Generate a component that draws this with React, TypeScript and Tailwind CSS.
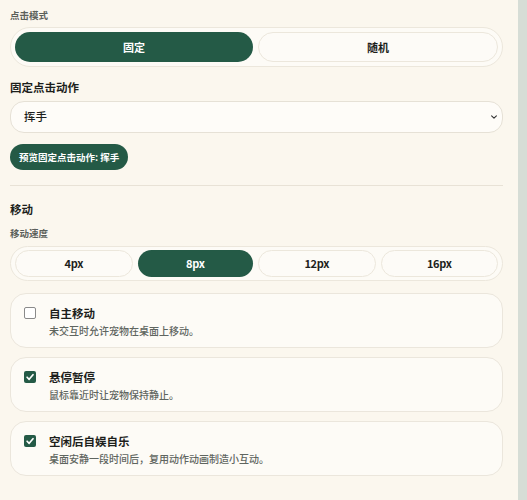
import React, { useState } from "react";

const font = { fontFamily: '"Noto Sans CJK SC", "Noto Sans", sans-serif' };

function Check({ checked }: { checked: boolean }) {
  return checked ? (
    <span className="flex h-[12px] w-[12px] items-center justify-center rounded-[2px] bg-[#245a46]">
      <svg viewBox="0 0 12 12" className="h-[10px] w-[10px]" fill="none" stroke="white" strokeWidth="2" strokeLinecap="round" strokeLinejoin="round">
        <path d="M2.5 6.3 L5 8.8 L9.6 3.2" />
      </svg>
    </span>
  ) : (
    <span className="block h-[12px] w-[12px] rounded-[2px] border border-[#8a8a8a] bg-white" />
  );
}

function Card({ title, desc, checked }: { title: string; desc: string; checked: boolean }) {
  return (
    <div className="flex h-[55px] items-start gap-[13px] rounded-[16px] border border-[#ebe6dc] bg-[#fdfbf6] pl-[13px] pt-[13px]">
      <Check checked={checked} />
      <div className="-mt-[3px] flex flex-col">
        <span className="text-[11.5px] font-bold leading-[18px] text-[#1d1f1c]">{title}</span>
        <span className="text-[10px] font-medium leading-[17px] text-[#5f655f]">{desc}</span>
      </div>
    </div>
  );
}

export default function App() {
  const [mode, setMode] = useState("固定");
  const [speed, setSpeed] = useState("8px");
  return (
    <div className="flex h-[500px] w-[527px] overflow-hidden bg-[#fbf7ee]" style={font}>
      <div className="flex w-[518px] flex-col pl-[10px] pr-[15px] pt-[7px]">
        <div className="text-[9.5px] font-bold leading-[16px] text-[#5b605a]">点击模式</div>
        <div className="mt-[4px] flex h-[40px] gap-[5px] rounded-full border border-[#ece7dc] bg-[#fdfbf6] p-[4px]">
          {["固定", "随机"].map((m) => (
            <button
              key={m}
              onClick={() => setMode(m)}
              className={
                m === mode
                  ? "flex-1 rounded-full bg-[#245a46] text-[11px] font-bold text-white"
                  : "flex-1 rounded-full border border-[#ece7dc] bg-[#fdfbf7] text-[11px] font-bold text-[#1d1f1c]"
              }
            >
              {m}
            </button>
          ))}
        </div>
        <div className="mt-[10px] text-[11.5px] font-bold leading-[20px] text-[#1d1f1c]">固定点击动作</div>
        <div className="mt-[4px] flex h-[32px] items-center justify-between rounded-[14px] border border-[#e6e1d6] bg-[#fefcf8] pl-[13px] pr-[4px]">
          <span className="text-[11.5px] font-medium text-[#1d1f1c]">挥手</span>
          <svg viewBox="0 0 10 10" className="h-[8px] w-[8px]" fill="none" stroke="#333" strokeWidth="1.4" strokeLinecap="round" strokeLinejoin="round">
            <path d="M2 3.5 L5 6.5 L8 3.5" />
          </svg>
        </div>
        <div className="mt-[11px] flex">
          <button className="h-[26px] rounded-full bg-[#245a46] px-[9px] text-[9.5px] font-bold text-white">
            预览固定点击动作: 挥手
          </button>
        </div>
        <div className="mt-[15px] h-px bg-[#e8e2d6]" />
        <div className="mt-[13px] text-[11.5px] font-bold leading-[20px] text-[#1d1f1c]">移动</div>
        <div className="mt-[6px] text-[9.5px] font-bold leading-[16px] text-[#5b605a]">移动速度</div>
        <div className="mt-[5px] flex h-[35px] gap-[5px] rounded-full border border-[#ece7dc] bg-[#fdfbf6] p-[3px] px-[4px]">
          {["4px", "8px", "12px", "16px"].map((s) => (
            <button
              key={s}
              onClick={() => setSpeed(s)}
              className={
                s === speed
                  ? "flex-1 rounded-full bg-[#245a46] text-[11px] font-bold tracking-[-0.3px] text-white"
                  : "flex-1 rounded-full border border-[#ece7dc] bg-[#fdfbf7] text-[11px] font-bold tracking-[-0.3px] text-[#1d1f1c]"
              }
            >
              {s}
            </button>
          ))}
        </div>
        <div className="mt-[12px] flex flex-col gap-[9px]">
          <Card title="自主移动" desc="未交互时允许宠物在桌面上移动。" checked={false} />
          <Card title="悬停暂停" desc="鼠标靠近时让宠物保持静止。" checked />
          <Card title="空闲后自娱自乐" desc="桌面安静一段时间后，复用动作动画制造小互动。" checked />
        </div>
      </div>
      <div className="flex-1 bg-[#d6ddd6]" />
    </div>
  );
}
